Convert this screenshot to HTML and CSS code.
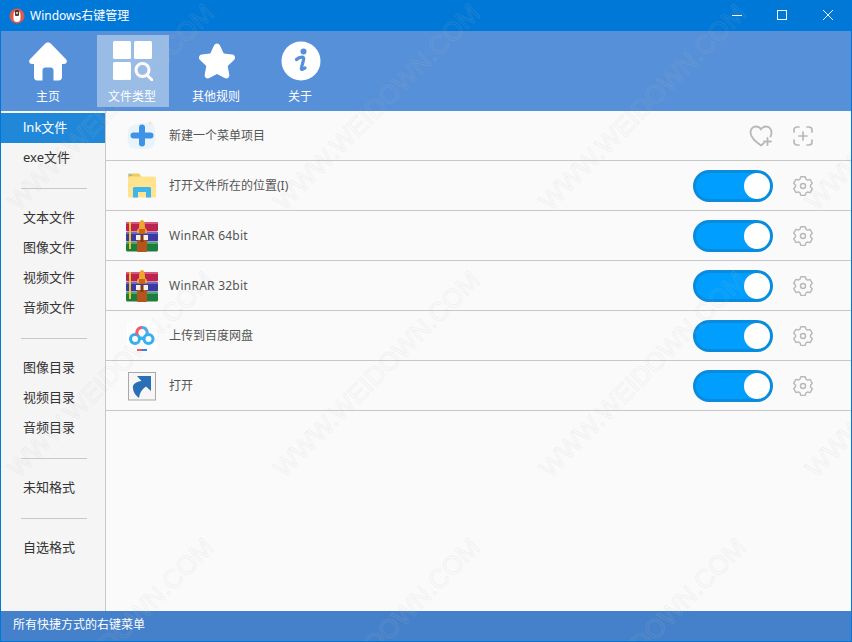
FILE: index.html
```html
<!DOCTYPE html>
<html lang="zh-CN">
<head>
  <meta charset="UTF-8" />
  <title>Windows右键管理</title>
  <link rel="stylesheet" href="styles.css">
</head>
<body>
  <div class="window">
    <div class="titlebar">
      <svg class="app-icon" viewBox="0 0 16 16">
        <circle cx="8" cy="8" r="7.5" fill="#e2574c"/>
        <rect x="4.500" y="3" width="7" height="11" rx="3.400" fill="#fff"/>
        <rect x="6" y="2" width="4" height="6" rx="1" fill="#4a3f35"/>
        <rect x="7" y="4" width="2" height="2" fill="#d9c9a8"/>
      </svg>
      <span class="app-title">Windows右键管理</span>
      <div class="win-buttons">
        <svg viewBox="0 0 46 30"><path d="M19 14.500h10" stroke="#fff" fill="none"/></svg>
        <svg viewBox="0 0 46 30"><rect x="18.500" y="9.500" width="9" height="9" stroke="#fff" fill="none"/></svg>
        <svg viewBox="0 0 46 30"><path d="M18 9l10 10M28 9l-10 10" stroke="#fff" fill="none"/></svg>
      </div>
    </div>

    <div class="toolbar">
      <div class="tool">
        <svg class="icon-home" viewBox="0 0 40 40"><path d="M20 1.500c1.200 0 2.200.5 3 1.300l15 15.500c1.800 1.900.6 4.700-1.900 4.700h-2.100v13c0 2-1.300 3.500-3.300 3.500h-5.200v-10c0-1.700-1.300-3-3-3h-5c-1.700 0-3 1.300-3 3v10h-5.200c-2 0-3.300-1.500-3.300-3.500v-13h-2.100c-2.500 0-3.700-2.800-1.900-4.700l15-15.500c.8-.8 1.800-1.300 3-1.300z" fill="#fff"/></svg>
        <span>主页</span>
      </div>
      <div class="tool active">
        <svg viewBox="0 0 40 40">
          <rect x="0" y="0" width="18" height="18" rx="1.500" fill="#fff"/>
          <rect x="21" y="0" width="18" height="18" rx="1.500" fill="#fff"/>
          <rect x="0" y="21" width="18" height="18" rx="1.500" fill="#fff"/>
          <circle cx="29.500" cy="29" r="6.500" fill="none" stroke="#fff" stroke-width="3"/>
          <path d="M34 34l5 5" stroke="#fff" stroke-width="3" stroke-linecap="round"/>
        </svg>
        <span>文件类型</span>
      </div>
      <div class="tool">
        <svg viewBox="0 0 40 40"><path d="M20 2.500c1.300 0 2.400.8 3 2l3.700 8 8.600 1.100c2.700.4 3.700 3.600 1.700 5.400l-6.300 6 1.600 8.700c.5 2.700-2.300 4.700-4.700 3.400l-7.600-4.200-7.600 4.200c-2.400 1.300-5.200-.7-4.700-3.400l1.600-8.700-6.300-6c-2-1.800-1-5 1.700-5.400l8.600-1.100 3.700-8c.6-1.200 1.700-2 3-2z" fill="#fff"/></svg>
        <span>其他规则</span>
      </div>
      <div class="tool">
        <svg viewBox="0 0 40 40">
          <circle cx="20" cy="20" r="19.500" fill="#fff"/>
          <circle cx="22.500" cy="10.500" r="3" fill="#5690d8"/>
          <path d="M15.500 18.500c1.500-1.500 3.500-2.300 5.500-2.300 1.500 0 2 1 1.600 2.500l-2.200 8.300c-.3 1.200.3 1.600 1.300 1.200l2.300-1.200" fill="none" stroke="#5690d8" stroke-width="3.200" stroke-linecap="round" stroke-linejoin="round"/>
        </svg>
        <span>关于</span>
      </div>
    </div>

    <div class="main">
      <div class="sidebar">
        <div class="side-item selected">lnk文件</div>
        <div class="side-item">exe文件</div>
        <div class="side-sep"></div>
        <div class="side-item">文本文件</div>
        <div class="side-item">图像文件</div>
        <div class="side-item">视频文件</div>
        <div class="side-item">音频文件</div>
        <div class="side-sep"></div>
        <div class="side-item">图像目录</div>
        <div class="side-item">视频目录</div>
        <div class="side-item">音频目录</div>
        <div class="side-sep"></div>
        <div class="side-item">未知格式</div>
        <div class="side-sep"></div>
        <div class="side-item">自选格式</div>
      </div>

      <div class="content">
        <div class="row">
          <svg class="row-icon" viewBox="0 0 32 32">
            <path d="M3 8c4-5 17-6 24-4 3 4 3 18 0 23-6 3-18 3-23 0-3-5-3-14-1-19z" fill="#e8f3fc"/>
            <path d="M16 7.500v16M7.500 15.500h17" stroke="#3f93e6" stroke-width="6" stroke-linecap="round"/>
            <path d="M24 1.500v3M22.500 3h3" stroke="#f6dfa8"/>
          </svg>
          <span class="row-label">新建一个菜单项目</span>
          <div class="row-end">
            <svg class="small-icon wide" viewBox="0 0 24 24">
              <path d="M12 21.500C7 18 1.500 14 1.500 8.500 1.500 5 4 2.500 7 2.500c2 0 3.800 1 5 2.800 1.200-1.800 3-2.800 5-2.800 3 0 5.500 2.500 5.500 6 0 1.500-.4 2.800-1 4M15 19l-3 2.500" fill="none" stroke="#b8b8b8" stroke-width="1.800" stroke-linecap="round"/>
              <path d="M18.500 14v7M15 17.500h7" stroke="#b8b8b8" stroke-width="1.800" stroke-linecap="round"/>
            </svg>
            <svg class="small-icon" viewBox="0 0 20 20">
              <path d="M1 6V4a3 3 0 0 1 3-3h2M14 1h2a3 3 0 0 1 3 3v2M19 14v2a3 3 0 0 1-3 3h-2M6 19H4a3 3 0 0 1-3-3v-2M10 6v8M6 10h8" fill="none" stroke="#b8b8b8" stroke-width="1.700" stroke-linecap="round"/>
            </svg>
          </div>
        </div>

        <div class="row">
          <svg class="row-icon" viewBox="0 0 32 32">
            <path d="M2 3.500h11l2 2.500v2H2z" fill="#f4c95d"/>
            <rect x="3" y="4.500" width="3" height="1.500" fill="#6cc5d8"/>
            <rect x="2" y="6.500" width="28" height="21" rx="1.500" fill="#ffe38e"/>
            <path d="M7 27.500V18.500c0-.8.700-1.500 1.500-1.500h15c.8 0 1.500.7 1.500 1.500v9h-5v-5.500h-8v5.500z" fill="#3db6ee"/>
          </svg>
          <span class="row-label">打开文件所在的位置(I)</span>
          <div class="row-end">
            <div class="toggle"><div class="knob"></div></div>
            <svg class="small-icon" viewBox="0 0 20 20"><use href="#gear"/></svg>
          </div>
        </div>

        <div class="row">
          <svg class="row-icon" viewBox="0 0 32 32"><use href="#winrar"/></svg>
          <span class="row-label latin">WinRAR 64bit</span>
          <div class="row-end">
            <div class="toggle"><div class="knob"></div></div>
            <svg class="small-icon" viewBox="0 0 20 20"><use href="#gear"/></svg>
          </div>
        </div>

        <div class="row">
          <svg class="row-icon" viewBox="0 0 32 32"><use href="#winrar"/></svg>
          <span class="row-label latin">WinRAR 32bit</span>
          <div class="row-end">
            <div class="toggle"><div class="knob"></div></div>
            <svg class="small-icon" viewBox="0 0 20 20"><use href="#gear"/></svg>
          </div>
        </div>

        <div class="row">
          <svg class="row-icon" viewBox="0 0 32 32">
            <rect x="1" y="0.500" width="30" height="31" rx="5" fill="#fff"/>
            <circle cx="9" cy="19" r="4.500" fill="none" stroke="#2fb0ef" stroke-width="3"/>
            <circle cx="22.500" cy="19" r="4.500" fill="none" stroke="#2fb0ef" stroke-width="3"/>
            <path d="M18 19c-1.500-1-3-1.500-4.500 0" fill="none" stroke="#2fb0ef" stroke-width="3"/>
            <path d="M11.500 15a5 5 0 0 1 4.500-7.500" fill="none" stroke="#ef5f6e" stroke-width="3"/>
            <path d="M16 7.500a5 5 0 0 1 4.500 7.500" fill="none" stroke="#4aa8ee" stroke-width="3"/>
            <path d="M11 30h5" stroke="#f0506e" stroke-width="2"/>
            <path d="M16 30h5" stroke="#2f80ed" stroke-width="2"/>
          </svg>
          <span class="row-label">上传到百度网盘</span>
          <div class="row-end">
            <div class="toggle"><div class="knob"></div></div>
            <svg class="small-icon" viewBox="0 0 20 20"><use href="#gear"/></svg>
          </div>
        </div>

        <div class="row">
          <svg class="row-icon" viewBox="0 0 32 32">
            <rect x="2.500" y="2.500" width="27" height="27.500" fill="#f6f6f6" stroke="#a8a8a8"/>
            <path d="M25 6v15l-5-4.500c-4 2.500-6.500 6.500-7 11.500-4-3-6.500-7-6-12 1-3 5-4.500 8.500-5l-4.500-5z" fill="#2a6fb5"/>
          </svg>
          <span class="row-label">打开</span>
          <div class="row-end">
            <div class="toggle"><div class="knob"></div></div>
            <svg class="small-icon" viewBox="0 0 20 20"><use href="#gear"/></svg>
          </div>
        </div>
      </div>
    </div>

    <div class="statusbar">所有快捷方式的右键菜单</div>

    <!-- faint diagonal watermark over the whole window -->
    <div class="marks">
      <span>WWW.WEIDOWN.COM</span>
      <span>WWW.WEIDOWN.COM</span>
      <span>WWW.WEIDOWN.COM</span>
      <span>WWW.WEIDOWN.COM</span>
      <span>WWW.WEIDOWN.COM</span>
      <span>WWW.WEIDOWN.COM</span>
      <span>WWW.WEIDOWN.COM</span>
      <span>WWW.WEIDOWN.COM</span>
      <span>WWW.WEIDOWN.COM</span>
      <span>WWW.WEIDOWN.COM</span>
      <span>WWW.WEIDOWN.COM</span>
      <span>WWW.WEIDOWN.COM</span>
    </div>
  </div>

  <svg class="defs" width="0" height="0">
    <defs>
      <g id="gear">
        <path d="M7.800 1.500h4.400l.8 2.500 1.500.9 2.600-.6 2.200 3.800-1.800 1.900v1.700l1.800 1.900-2.200 3.800-2.600-.6-1.500.9-.8 2.500H7.800L7 17.600l-1.500-.9-2.600.6L.7 13.500l1.800-1.900V9.900L.7 8l2.200-3.800 2.600.6L7 3.900z" transform="translate(0 -.8)" fill="none" stroke="#b8b8b8" stroke-width="1.400" stroke-linejoin="round"/>
        <circle cx="10" cy="10" r="2.500" fill="none" stroke="#b8b8b8" stroke-width="1.400"/>
      </g>
      <g id="winrar">
        <rect x="0" y="2" width="32" height="9.500" rx="1.500" fill="#bb2450"/>
        <rect x="0" y="2" width="32" height="2" rx="1" fill="#d9587c"/>
        <rect x="0" y="12" width="32" height="9.500" rx="1" fill="#3a3aa0"/>
        <rect x="0" y="12" width="32" height="2" fill="#6a6ac8"/>
        <rect x="0" y="22" width="32" height="9.500" rx="1.500" fill="#1c7d3e"/>
        <rect x="0" y="22" width="32" height="2" fill="#4aa868"/>
        <rect x="3" y="2" width="2" height="27" fill="#f2c230"/>
        <path d="M13 8c0-5 1-8 3-8s3 3 3 8l2 2v3H11v-3z" fill="#f0a62c"/>
        <rect x="13" y="9" width="6" height="5" fill="#c8641e"/>
        <rect x="10" y="15" width="12" height="5" fill="#f4f0e6"/>
        <rect x="11" y="20" width="10" height="12" rx="1" fill="#b5541c"/>
        <rect x="14.500" y="15" width="3" height="7" fill="#7a3a12"/>
      </g>
    </defs>
  </svg>
</body>
</html>
```

FILE: styles.css
```css
* {
  margin: 0;
  padding: 0;
  box-sizing: border-box;
}

body {
  font-family: "Noto Sans", "Noto Sans CJK SC", sans-serif;
  background: #fafafa;
  overflow: hidden;
}

.window {
  position: relative;
  width: 852px;
  height: 642px;
  display: flex;
  flex-direction: column;
  border: 1px solid #0078d7;
  overflow: hidden;
}

.titlebar {
  height: 30px;
  flex: none;
  display: flex;
  align-items: center;
  background: #0078d7;
  color: #fff;
  font-size: 12px;
  padding-left: 8px;
}

.app-icon {
  width: 16px;
  height: 16px;
  margin-right: 5px;
}

.app-title {
  margin-bottom: 2px;
}

.win-buttons {
  margin-left: auto;
  display: flex;
}

.win-buttons svg {
  width: 46px;
  height: 30px;
}

.toolbar {
  height: 80px;
  flex: none;
  display: flex;
  gap: 12px;
  padding: 4px 0 0 12px;
  background: #5690d8;
}

.tool {
  width: 72px;
  height: 72px;
  display: flex;
  flex-direction: column;
  align-items: center;
  padding-top: 6px;
  color: #fff;
  font-size: 12px;
}

.tool svg {
  width: 40px;
  height: 40px;
  margin-bottom: 6px;
}

.tool .icon-home {
  margin-right: 2px;
}

.tool span {
  line-height: 20px;
  margin-right: 2px;
}

.tool.active {
  background: rgba(255, 255, 255, 0.4);
}

.main {
  flex: 1;
  display: flex;
  min-height: 0;
}

.sidebar {
  width: 105px;
  flex: none;
  padding-top: 2px;
  background: #f5f5f5;
  border-right: 1px solid #c8c8c8;
}

.side-item {
  height: 30px;
  line-height: 28px;
  padding-left: 22px;
  font-size: 13px;
  color: #333;
}

.side-item.selected {
  background: #2188d9;
  color: #fff;
}

.side-sep {
  height: 1px;
  margin: 15px 18px 14px 20px;
  background: #c8c8c8;
}

.content {
  flex: 1;
  background: #fafafa;
}

.row {
  height: 50px;
  display: flex;
  align-items: center;
  border-bottom: 1px solid #c8c8c8;
  padding-left: 20px;
}

.row-icon {
  width: 32px;
  height: 32px;
  flex: none;
}

.row-label {
  margin-left: 11px;
  margin-bottom: 2px;
  font-size: 12px;
  color: #555;
}

.row-label.latin {
  margin-bottom: 0;
  letter-spacing: 0.25px;
}

.row-end {
  margin-left: auto;
  display: flex;
  align-items: center;
  gap: 20px;
  padding-right: 38px;
}

.small-icon {
  width: 20px;
  height: 20px;
}

.small-icon.wide {
  width: 24px;
  height: 24px;
}

.toggle {
  width: 80px;
  height: 32px;
  display: flex;
  justify-content: flex-end;
  align-items: center;
  border: 3px solid #0a8bdc;
  border-radius: 16px;
  background: #009fff;
}

.knob {
  width: 26px;
  height: 26px;
  border-radius: 50%;
  background: #fff;
}

.statusbar {
  height: 30px;
  flex: none;
  line-height: 27px;
  padding-left: 12px;
  font-size: 12px;
  color: #fff;
  background: #4581ca;
}

.defs {
  position: absolute;
}

.marks {
  position: absolute;
  left: -24px;
  top: -28px;
  display: grid;
  grid-template-columns: repeat(4, 266px);
  grid-auto-rows: 267px;
  pointer-events: none;
}

.marks span {
  align-self: center;
  justify-self: center;
  font-family: "Liberation Sans", sans-serif;
  font-size: 26px;
  line-height: 30px;
  white-space: nowrap;
  color: transparent;
  -webkit-text-stroke: 1px rgba(190, 190, 190, 0.16);
  transform: rotate(-45deg);
}
```
